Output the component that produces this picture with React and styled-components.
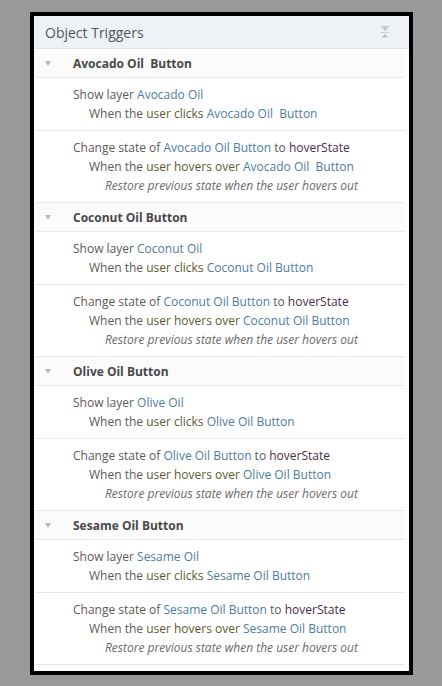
import React from 'react'
import styled, { createGlobalStyle } from 'styled-components'

const GlobalStyle = createGlobalStyle`
  html, body {
    margin: 0;
    padding: 0;
    background: #999999;
  }
  body {
    font-family: "Open Sans", "Noto Sans", Arial, sans-serif;
  }
`

const groups = [
  { name: 'Avocado Oil  Button', layer: 'Avocado Oil', state: 'Avocado Oil Button', target: 'Avocado Oil  Button' },
  { name: 'Coconut Oil Button', layer: 'Coconut Oil', state: 'Coconut Oil Button', target: 'Coconut Oil Button' },
  { name: 'Olive Oil Button', layer: 'Olive Oil', state: 'Olive Oil Button', target: 'Olive Oil Button' },
  { name: 'Sesame Oil Button', layer: 'Sesame Oil', state: 'Sesame Oil Button', target: 'Sesame Oil Button' },
]

// collapse-all glyph: bar, down arrow, divider, up arrow
const CollapseIcon = () => (
  <svg width="10" height="14" viewBox="0 0 10 14">
    <path d="M1 1.5h8" stroke="#c4c4c4" strokeWidth="1" />
    <path d="M2 2.5h6L5 6z" fill="#bcbcbc" />
    <path d="M0.5 7.5h9" stroke="#d2d2d2" strokeWidth="1" />
    <path d="M2 12.5h6L5 9z" fill="#bcbcbc" />
  </svg>
)

const App = () => {
  return (
    <>
      <GlobalStyle />
      <Page>
        <Frame>
          <Panel>
            <Header>
              <HeaderTitle>Object Triggers</HeaderTitle>
              <CollapseIcon />
            </Header>
            <List>
              {groups.map((g) => (
                <Group key={g.name}>
                  <GroupRow>
                    <Caret />
                    <GroupName>{g.name}</GroupName>
                  </GroupRow>
                  <Action>
                    <Line level={0}>
                      Show layer <Link>{g.layer}</Link>
                    </Line>
                    <Line level={1}>
                      When the <Event>user clicks</Event> <Link>{g.target}</Link>
                    </Line>
                  </Action>
                  <Action>
                    <Line level={0}>
                      Change state of <Link>{g.state}</Link> to <StateName>hoverState</StateName>
                    </Line>
                    <Line level={1}>
                      When the <Event>user hovers over</Event> <Link>{g.target}</Link>
                    </Line>
                    <Note>Restore previous state when the user hovers out</Note>
                  </Action>
                </Group>
              ))}
            </List>
          </Panel>
        </Frame>
      </Page>
    </>
  )
}

const Page = styled.div`
  width: 442px;
  height: 686px;
  padding: 12px 29px 11px 30px;
  box-sizing: border-box;
`
const Frame = styled.div`
  height: 100%;
  border: 4px solid #000;
  box-sizing: border-box;
  background: #fff;
`
const Panel = styled.div`
  display: flex;
  flex-direction: column;
  height: 100%;
`
const Header = styled.div`
  display: flex;
  align-items: center;
  justify-content: space-between;
  height: 32px;
  padding: 0 19px 0 11px;
  background: #eef2f7;
  border-bottom: 1px solid #dde3ea;
`
const HeaderTitle = styled.div`
  font-size: 14px;
  color: #555;
`
const List = styled.div`
  display: flex;
  flex-direction: column;
  margin: 0 4px 0 1px;
`
const Group = styled.div`
  display: flex;
  flex-direction: column;
`
const GroupRow = styled.div`
  display: flex;
  align-items: center;
  height: 28px;
  background: #fbfbfb;
  border-bottom: 1px solid #e8e8e8;
`
const Caret = styled.span`
  width: 0;
  height: 0;
  margin: 0 0 0 10px;
  border-left: 3.5px solid transparent;
  border-right: 3.5px solid transparent;
  border-top: 5px solid #b8b8b8;
`
const GroupName = styled.span`
  margin-left: 22px;
  font-size: 12px;
  font-weight: bold;
  color: #484848;
  white-space: pre;
`
const Action = styled.div`
  display: flex;
  flex-direction: column;
  padding: 7px 0 7px;
  border-bottom: 1px solid #e8e8e8;
`
const Line = styled.div`
  padding-left: ${(p) => 38 + p.level * 16}px;
  font-size: 12px;
  line-height: 19px;
  color: #5a5a5a;
  white-space: pre;
`
const Note = styled.div`
  padding-left: 70px;
  font-size: 12px;
  line-height: 19px;
  font-style: italic;
  color: #6a6a6a;
  white-space: pre;
`
const Link = styled.span`
  color: #4e7ca2;
`
const Event = styled.span`
  color: #5c5a30;
`
const StateName = styled.span`
  color: #4a2c48;
`

export default App
